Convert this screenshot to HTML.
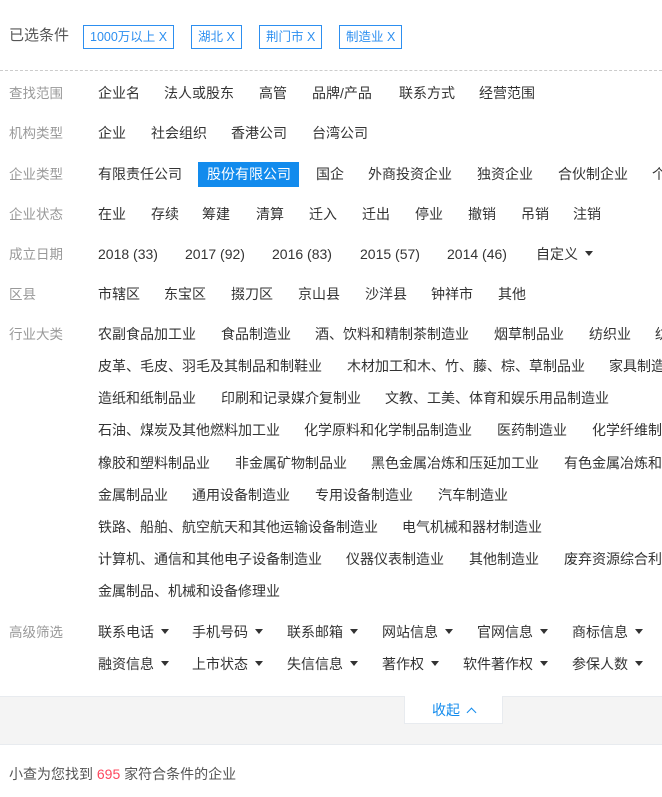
<!DOCTYPE html>
<html><head><meta charset="utf-8"><style>
*{margin:0;padding:0;box-sizing:border-box}
body{width:662px;height:797px;overflow:hidden;background:#fff;position:relative;font-family:"Liberation Sans","Noto Sans CJK SC",sans-serif;font-size:14px;color:#333}
.a{position:absolute;white-space:nowrap;line-height:20px}
.l{color:#999;font-size:13.5px}
.tag{position:absolute;top:25px;height:24px;border:1px solid #2d8ff0;color:#2d8ff0;font-size:12.5px;line-height:22px;padding:0 6px;white-space:nowrap}
.c:after{content:"";display:inline-block;margin-left:7px;vertical-align:3px;border-left:4px solid transparent;border-right:4px solid transparent;border-top:5px solid #333}
</style></head><body>
<div class="a" style="left:9px;top:26px;color:#555;font-size:15px">已选条件</div>
<div class="tag" style="left:83px">1000万以上 X</div>
<div class="tag" style="left:191px">湖北 X</div>
<div class="tag" style="left:259px">荆门市 X</div>
<div class="tag" style="left:339px">制造业 X</div>
<div style="position:absolute;left:0;top:70px;width:662px;border-top:1px dashed #ccc"></div>

<div class="a l" style="left:9px;top:84px">查找范围</div>
<div class="a" style="left:98px;top:83px">企业名</div><div class="a" style="left:164px;top:83px">法人或股东</div><div class="a" style="left:259px;top:83px">高管</div><div class="a" style="left:312px;top:83px">品牌/产品</div><div class="a" style="left:399px;top:83px">联系方式</div><div class="a" style="left:479px;top:83px">经营范围</div>

<div class="a l" style="left:9px;top:124px">机构类型</div>
<div class="a" style="left:98px;top:123px">企业</div><div class="a" style="left:151px;top:123px">社会组织</div><div class="a" style="left:231px;top:123px">香港公司</div><div class="a" style="left:312px;top:123px">台湾公司</div>

<div class="a l" style="left:9px;top:165px">企业类型</div>
<div class="a" style="left:98px;top:164px">有限责任公司</div>
<div style="position:absolute;left:198px;top:162px;width:101px;height:25px;background:#128bed"></div>
<div class="a" style="left:207px;top:164px;color:#fff">股份有限公司</div>
<div class="a" style="left:316px;top:164px">国企</div><div class="a" style="left:368px;top:164px">外商投资企业</div><div class="a" style="left:477px;top:164px">独资企业</div><div class="a" style="left:558px;top:164px">合伙制企业</div><div class="a" style="left:652px;top:164px">个</div>

<div class="a l" style="left:9px;top:205px">企业状态</div>
<div class="a" style="left:98px;top:204px">在业</div><div class="a" style="left:151px;top:204px">存续</div><div class="a" style="left:202px;top:204px">筹建</div><div class="a" style="left:256px;top:204px">清算</div><div class="a" style="left:309px;top:204px">迁入</div><div class="a" style="left:362px;top:204px">迁出</div><div class="a" style="left:415px;top:204px">停业</div><div class="a" style="left:468px;top:204px">撤销</div><div class="a" style="left:521px;top:204px">吊销</div><div class="a" style="left:573px;top:204px">注销</div>

<div class="a l" style="left:9px;top:245px">成立日期</div>
<div class="a" style="left:98px;top:244px">2018 (33)</div><div class="a" style="left:185px;top:244px">2017 (92)</div><div class="a" style="left:272px;top:244px">2016 (83)</div><div class="a" style="left:360px;top:244px">2015 (57)</div><div class="a" style="left:447px;top:244px">2014 (46)</div><div class="a c" style="left:536px;top:244px">自定义</div>

<div class="a l" style="left:9px;top:285px">区县</div>
<div class="a" style="left:98px;top:284px">市辖区</div><div class="a" style="left:164px;top:284px">东宝区</div><div class="a" style="left:231px;top:284px">掇刀区</div><div class="a" style="left:298px;top:284px">京山县</div><div class="a" style="left:365px;top:284px">沙洋县</div><div class="a" style="left:431px;top:284px">钟祥市</div><div class="a" style="left:498px;top:284px">其他</div>

<div class="a l" style="left:9px;top:325px">行业大类</div>
<div class="a" style="left:98px;top:324px">农副食品加工业</div><div class="a" style="left:221px;top:324px">食品制造业</div><div class="a" style="left:315px;top:324px">酒、饮料和精制茶制造业</div><div class="a" style="left:494px;top:324px">烟草制品业</div><div class="a" style="left:589px;top:324px">纺织业</div><div class="a" style="left:655px;top:324px">纺</div>
<div class="a" style="left:98px;top:356px">皮革、毛皮、羽毛及其制品和制鞋业</div><div class="a" style="left:347px;top:356px">木材加工和木、竹、藤、棕、草制品业</div><div class="a" style="left:609px;top:356px">家具制造</div>
<div class="a" style="left:98px;top:388px">造纸和纸制品业</div><div class="a" style="left:221px;top:388px">印刷和记录媒介复制业</div><div class="a" style="left:385px;top:388px">文教、工美、体育和娱乐用品制造业</div>
<div class="a" style="left:98px;top:420px">石油、煤炭及其他燃料加工业</div><div class="a" style="left:304px;top:420px">化学原料和化学制品制造业</div><div class="a" style="left:497px;top:420px">医药制造业</div><div class="a" style="left:592px;top:420px">化学纤维制</div>
<div class="a" style="left:98px;top:453px">橡胶和塑料制品业</div><div class="a" style="left:235px;top:453px">非金属矿物制品业</div><div class="a" style="left:371px;top:453px">黑色金属冶炼和压延加工业</div><div class="a" style="left:564px;top:453px">有色金属冶炼和</div>
<div class="a" style="left:98px;top:485px">金属制品业</div><div class="a" style="left:192px;top:485px">通用设备制造业</div><div class="a" style="left:315px;top:485px">专用设备制造业</div><div class="a" style="left:438px;top:485px">汽车制造业</div>
<div class="a" style="left:98px;top:517px">铁路、船舶、航空航天和其他运输设备制造业</div><div class="a" style="left:402px;top:517px">电气机械和器材制造业</div>
<div class="a" style="left:98px;top:549px">计算机、通信和其他电子设备制造业</div><div class="a" style="left:346px;top:549px">仪器仪表制造业</div><div class="a" style="left:469px;top:549px">其他制造业</div><div class="a" style="left:564px;top:549px">废弃资源综合利</div>
<div class="a" style="left:98px;top:581px">金属制品、机械和设备修理业</div>

<div class="a l" style="left:9px;top:623px">高级筛选</div>
<div class="a c" style="left:98px;top:622px">联系电话</div><div class="a c" style="left:192px;top:622px">手机号码</div><div class="a c" style="left:287px;top:622px">联系邮箱</div><div class="a c" style="left:382px;top:622px">网站信息</div><div class="a c" style="left:477px;top:622px">官网信息</div><div class="a c" style="left:572px;top:622px">商标信息</div>
<div class="a c" style="left:98px;top:654px">融资信息</div><div class="a c" style="left:192px;top:654px">上市状态</div><div class="a c" style="left:287px;top:654px">失信信息</div><div class="a c" style="left:382px;top:654px">著作权</div><div class="a c" style="left:463px;top:654px">软件著作权</div><div class="a c" style="left:572px;top:654px">参保人数</div>

<div style="position:absolute;left:0;top:696px;width:662px;height:49px;background:#f4f4f4;border-top:1px solid #e8ebef;border-bottom:1px solid #e8ebef"></div>
<div style="position:absolute;left:404px;top:696px;width:99px;height:28px;background:#fff;border:1px solid #e8ebef;border-top:none"></div>
<div class="a" style="left:432px;top:700px;color:#128bed">收起 <span style="display:inline-block;width:7px;height:7px;border-left:1px solid #128bed;border-top:1px solid #128bed;transform:rotate(45deg);margin-left:4px;vertical-align:-1px"></span></div>

<div class="a" style="left:9px;top:764px;color:#555">小查为您找到 <span style="color:#fd485e">695</span> 家符合条件的企业</div>
</body></html>
